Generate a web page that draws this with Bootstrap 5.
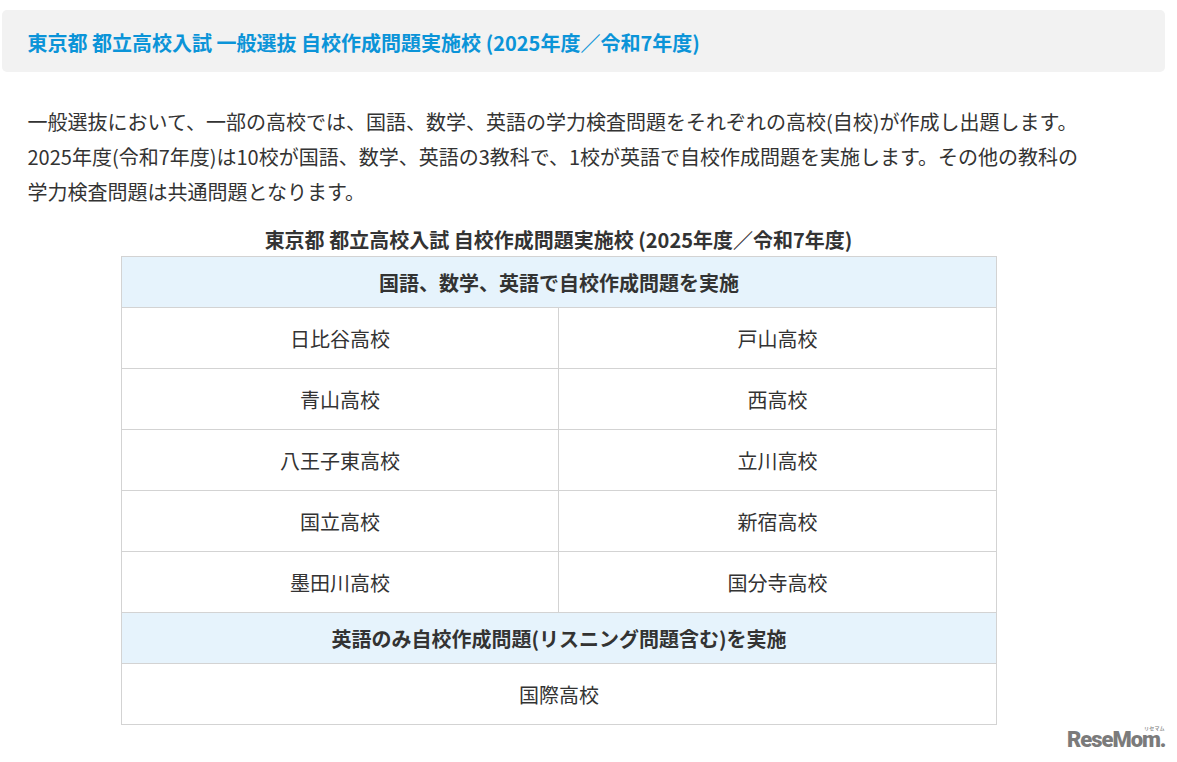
<!DOCTYPE html>
<html lang="ja">
<head>
<meta charset="utf-8">
<title>東京都立高校入試</title>
<link rel="stylesheet" href="https://cdn.jsdelivr.net/npm/bootstrap@5.3.0/dist/css/bootstrap.min.css">
<style>
html,body{height:100%;}
body{font-family:"Noto Sans CJK JP","Noto Sans",sans-serif;color:#333;background:#fff;font-size:20px;overflow:hidden;}
.page-wrap{padding:10px 12px 0 2px;position:relative;height:762px;}
.heading-box{background:#f2f2f2;border-radius:5px;height:62px;padding:0 25.5px;margin:0 0 32px;color:#0b94d8;font-size:20px;font-weight:700;line-height:66px;}
.intro{margin:0 0 16px 25.5px;width:1060px;font-size:20px;line-height:35px;}
.table-title{font-size:20px;font-weight:700;text-align:center;line-height:30px;margin:0 0 1px;width:1113px;}
.school-table{width:876px;margin:0 0 0 119px;border-collapse:collapse;table-layout:fixed;}
.school-table td,.school-table th{border:1px solid #d3d3d3;text-align:center;vertical-align:middle;padding:2px 0 0;font-size:20px;line-height:30px;color:#333;}
.school-table td{height:61px;}
.school-table th{height:51px;background:#e6f3fc;font-weight:700;}
.col-left{width:437px;}
.logo-mark{position:absolute;left:1067px;top:730px;font-family:Roboto,"Liberation Sans",sans-serif;font-weight:900;font-size:22px;letter-spacing:-1.05px;color:#7b7b7b;line-height:20px;white-space:nowrap;}
.logo-kana{position:absolute;left:77px;top:-5px;font-family:"Noto Sans CJK JP",sans-serif;font-size:5px;font-weight:500;letter-spacing:.2px;line-height:5px;}
</style>
</head>
<body>
<div class="page-wrap">
<h2 class="heading-box">東京都 都立高校入試 一般選抜 自校作成問題実施校 (2025年度／令和7年度)</h2>
<p class="intro">一般選抜において、一部の高校では、国語、数学、英語の学力検査問題をそれぞれの高校(自校)が作成し出題します。2025年度(令和7年度)は10校が国語、数学、英語の3教科で、1校が英語で自校作成問題を実施します。その他の教科の学力検査問題は共通問題となります。</p>
<p class="table-title">東京都 都立高校入試 自校作成問題実施校 (2025年度／令和7年度)</p>
<table class="school-table">
<colgroup><col class="col-left"><col></colgroup>
<tbody>
<tr><th colspan="2">国語、数学、英語で自校作成問題を実施</th></tr>
<tr><td>日比谷高校</td><td>戸山高校</td></tr>
<tr><td>青山高校</td><td>西高校</td></tr>
<tr><td>八王子東高校</td><td>立川高校</td></tr>
<tr><td>国立高校</td><td>新宿高校</td></tr>
<tr><td>墨田川高校</td><td>国分寺高校</td></tr>
<tr><th colspan="2">英語のみ自校作成問題(リスニング問題含む)を実施</th></tr>
<tr><td colspan="2">国際高校</td></tr>
</tbody>
</table>
<div class="logo-mark">ReseMom.<span class="logo-kana">リセマム</span></div>
</div>
</body>
</html>
